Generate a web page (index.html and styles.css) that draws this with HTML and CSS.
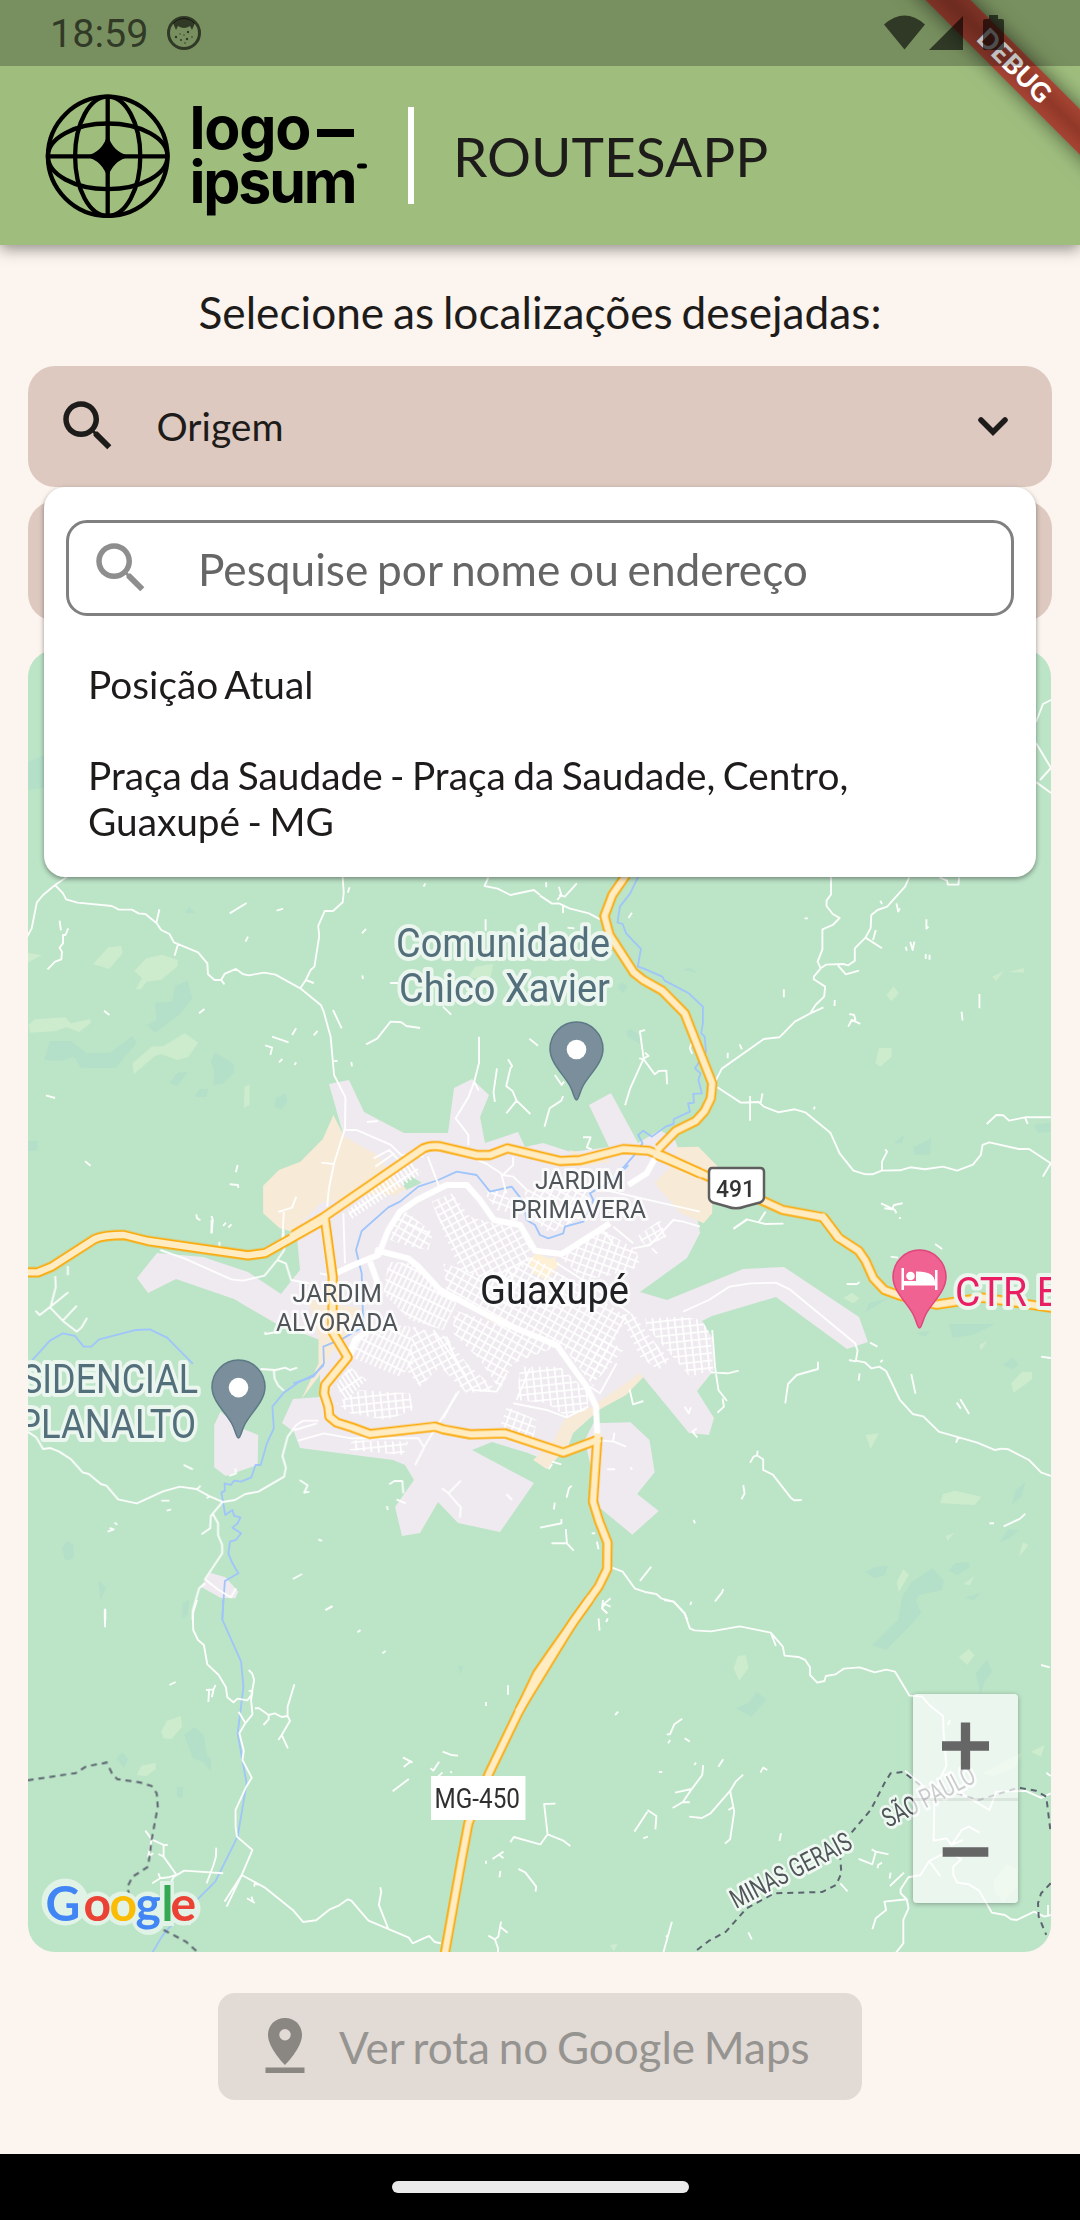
FILE: index.html
```html
<!DOCTYPE html>
<html lang="pt-BR">
<head>
<meta charset="utf-8">
<title>RoutesApp</title>
<link rel="stylesheet" href="styles.css">
</head>
<body>
<div class="screen">
  <header class="appbar">
    <svg class="logo" width="340" height="140" viewBox="40 85 340 140">
      <g class="globe">
        <ellipse cx="107.7" cy="155.3" rx="59.8" ry="59.6"/>
        <ellipse cx="107.7" cy="155.3" rx="32.6" ry="59.6"/>
        <ellipse cx="107.7" cy="155.3" rx="59.8" ry="32.8"/>
        <path d="M107.7 95V215M48 155.3H168"/>
      </g>
      <path d="M107.7 133Q112 151 130 155.3Q112 160 107.7 177.600Q103 160 85.500 155.300Q103 151 107.700 133Z"/>
      <text class="logo-text" x="189.500" y="147.500" textLength="122">logo</text>
      <text class="logo-text" x="189.500" y="201.800" textLength="168">ipsum</text>
      <rect x="317" y="128" width="37" height="8"/>
      <rect x="357" y="162.500" width="10" height="5" rx="2.500"/>
    </svg>
    <span class="divider"></span>
    <h1>ROUTESAPP</h1>
  </header>

  <div class="banner"><span>DEBUG</span></div>

  <div class="statusbar">
    <span class="clock">18:59</span>
    <svg width="36" height="36" viewBox="0 0 36 36">
      <circle cx="18" cy="18" r="15.500" fill="none" stroke="currentColor" stroke-width="3"/>
      <path fill="currentColor" d="M7 8Q18-2 29 8L26 15L24 11Q18 15 12 11L10 15Z"/>
      <g fill="currentColor"><circle cx="10" cy="22" r="1.200"/><circle cx="21" cy="24" r="1.200"/><circle cx="22" cy="17" r="1.200"/><circle cx="15" cy="25" r="1"/><circle cx="18" cy="20" r=".7"/><circle cx="26" cy="22" r=".8"/><circle cx="14" cy="19" r=".7"/><circle cx="19" cy="28" r=".8"/></g>
    </svg>
    <svg class="signals" width="124" height="40" viewBox="882 13 124 40" fill="currentColor">
      <path d="M883 24.500Q903.500 6.500 924 24.500L903.500 49.500Z"/>
      <path d="M928 50L962 16V50Z"/>
      <path d="M988 15H997V19H1001Q1003 19 1003 21V48Q1003 50 1001 50H984Q982 50 982 48V21Q982 19 984 19H988Z"/>
    </svg>
  </div>

  <main>
    <h2>Selecione as localizações desejadas:</h2>
    <section class="fields">
      <div class="field">
        <svg class="search" viewBox="0 0 24 24"><path d="M15.500 14h-.79l-.28-.27C15.410 12.590 16 11.110 16 9.500 16 5.910 13.090 3 9.500 3S3 5.910 3 9.500 5.910 16 9.500 16c1.610 0 3.090-.59 4.230-1.570l.27.28v.79l5 4.990L20.490 19l-4.990-5zm-6 0C7.010 14 5 11.990 5 9.500S7.010 5 9.500 5 14 7.010 14 9.500 11.990 14 9.500 14z"/></svg>
        <span>Origem</span>
        <svg class="chevron" width="36" height="26" viewBox="0 0 36 26"><path d="M6 7L18 19L30 7"/></svg>
      </div>
      <div class="field"></div>
      <div class="menu">
        <div class="query">
          <svg class="search" viewBox="0 0 24 24"><path d="M15.500 14h-.79l-.28-.27C15.410 12.590 16 11.110 16 9.500 16 5.910 13.090 3 9.500 3S3 5.910 3 9.500 5.910 16 9.500 16c1.610 0 3.090-.59 4.230-1.570l.27.28v.79l5 4.990L20.490 19l-4.990-5zm-6 0C7.010 14 5 11.990 5 9.500S7.010 5 9.500 5 14 7.010 14 9.500 11.990 14 9.500 14z"/></svg>
          <span>Pesquise por nome ou endereço</span>
        </div>
        <ul>
          <li>Posição Atual</li>
          <li>Praça da Saudade - Praça da Saudade, Centro, Guaxupé - MG</li>
        </ul>
      </div>
    </section>

    <section class="map">
      <svg width="1023" height="1302" viewBox="28 650 1023 1302">
        <defs>
          <pattern id="grid" width="22" height="22" patternUnits="userSpaceOnUse"><path d="M0 2.500H22M2.500 0V22"/></pattern>
          <pattern id="g20" href="#grid" patternTransform="rotate(20)"/>
          <pattern id="g30" href="#grid" patternTransform="rotate(29)"/>
          <pattern id="gm28" href="#grid" patternTransform="rotate(-28)"/>
          <pattern id="g5" href="#grid" patternTransform="rotate(-6)"/>
          <pattern id="fine" width="15" height="32" patternUnits="userSpaceOnUse" patternTransform="rotate(26)"><path d="M0 2.500H15M2.500 0V32"/></pattern>
          <pattern id="rows" width="13" height="36" patternUnits="userSpaceOnUse" patternTransform="rotate(-33)"><path d="M0 2.500H13M2.500 0V36"/></pattern>
          <g id="highways">
            <path transform="translate(540 860) scale(.3444 .3333)" d="M250 45L210 105L187 168L202 225L272 337L300 360L355 392L420 460L500 670L496 715L478 753L452 783L395 812L345 865"/>
            <path transform="translate(300 1130) scale(.3333)" d="M-20 315L70 262L370 55Q390 45 420 49L530 75H570L622 55L780 93L840 90L970 57L1045 62L1090 78L1200 130M75 270L98 440L97 605L143 682L75 765L72 790L85 830L88 860L110 878L155 892L210 912L405 890L430 898L510 913L615 910L790 968L892 930"/>
            <path transform="translate(540 860) scale(.3444 .3333)" d="M340 885L490 950L620 1010L705 1050L822 1072L865 1130"/>
            <path transform="translate(540 1220) scale(.3444 .3333)" d="M822 -8L865 52L925 92L945 122L968 175L1000 210L1040 225L1150 254L1285 233L1490 264M167 650L154 845L172 905L196 968L195 1047L170 1100L100 1200L-60 1470"/>
            <path transform="translate(0 1220) scale(.3444 .3333)" d="M60 157L110 157L150 140L275 57Q300 45 360 45L430 63L720 106L770 99L940 0"/>
            <path transform="translate(0 1600) scale(.3444 .3333)" d="M1710 0L1600 160L1560 220L1420 520L1360 670L1340 780L1290 1070"/>
          </g>
        </defs>

        <rect x="28" y="650" width="1023" height="1302" fill="#bce4c7"/>

        <g fill="#cdebcd">
          <path transform="translate(0 860) scale(.3444 .3333)" d="M80 278L122 286L80 308ZM270 312L315 262L352 258L356 280L317 327ZM390 332L425 295L470 284L516 300V318L468 360L425 365L410 388H394L412 355ZM83 495L100 478L190 472L205 490L263 477V490L230 516L192 502L160 514L88 518ZM385 610L440 560L475 558L536 520L576 548L546 592L515 600L468 583L450 588L388 643ZM710 680L725 673V735L708 743ZM1360 350L1380 320L1432 312L1425 350L1400 360Z"/>
          <path transform="translate(540 860) scale(.3444 .3333)" d="M1006 405L1027 379L1042 400L1020 424ZM984 564H1021V590L988 620L974 610ZM1312 350L1346 334L1325 362ZM1360 336L1405 324V338Z"/>
          <path transform="translate(540 1220) scale(.3444 .3333)" d="M880 235L905 218L928 235L910 250ZM945 645L984 640L960 687ZM1162 850L1170 822L1205 812L1282 830L1262 855ZM1368 490L1400 455L1429 456V478L1375 518ZM1276 375L1299 362L1280 392ZM1036 1085L1055 1047L1071 1065L1042 1116ZM1178 948L1203 938L1184 962ZM1390 1012L1402 967L1419 975ZM1230 1092L1262 1067L1248 1096Z"/>
          <path transform="translate(540 1600) scale(.3444 .3333)" d="M1216 172L1245 147L1262 165L1241 195ZM562 205L575 168L597 165L606 203L578 243ZM1425 455L1465 435L1455 470ZM1285 520L1400 458L1380 500L1320 528ZM1318 842L1355 793L1385 810V860L1345 905L1318 872ZM203 1035L225 1031L215 1055Z"/>
          <path transform="translate(0 1600) scale(.3444 .3333)" d="M468 395L485 362L525 348L529 380L498 417L475 415ZM397 525L410 497L452 488V508L425 529Z"/>
        </g>
        <g fill="#b4dfc9">
          <path transform="translate(0 860) scale(.3444 .3333)" d="M128 600L145 543H205L252 580L320 578L385 528L396 550L335 623H235L215 590L180 602ZM450 428L500 425L508 378L545 362L558 415L524 460L450 518L427 496L455 480ZM612 605L625 577L678 612L680 635L650 670L620 675L622 632ZM493 668L515 638L546 635L515 678ZM565 710L580 688L606 686L598 711ZM797 742L800 715L830 700L834 725L818 746ZM537 160L549 140L567 160ZM80 842L109 844L108 872H80Z"/>
          <path transform="translate(540 860) scale(.3444 .3333)" d="M415 330L435 322L455 338ZM252 515L262 508L290 525V552L255 530ZM1083 862L1136 836L1132 884H1088ZM1028 850L1057 824L1052 850ZM1436 795L1482 788V815L1445 818ZM226 380L240 368L254 380L240 400Z"/>
          <path transform="translate(540 1220) scale(.3444 .3333)" d="M1187 312H1322L1255 345L1198 353ZM1092 340L1132 332L1118 350ZM946 276L955 250L1014 233ZM1344 434L1373 413L1389 435L1370 448ZM1370 855L1382 810L1409 787L1398 830ZM1336 965L1360 927L1389 930L1365 955ZM946 1055L975 1040L1009 1038L1002 1065L970 1075ZM1187 1050L1205 1030L1245 1026L1248 1042L1210 1065ZM1052 1130L1080 1085L1140 1045L1172 1080L1168 1110L1100 1125L1092 1140L1106 1178L1085 1205L1005 1290L965 1275L1040 1200ZM1235 1132L1280 1118L1258 1142Z"/>
          <path transform="translate(0 1600) scale(.3444 .3333)" d="M535 405L565 382L592 405L600 465L613 475L612 515L590 485L560 475ZM337 475L355 457L372 478L360 503ZM513 560L532 562L530 595L514 590ZM530 10L550 0L545 45L530 55ZM1329 197L1345 200L1337 222Z"/>
          <path transform="translate(540 1600) scale(.3444 .3333)" d="M570 325L605 310L630 276L656 298L615 350ZM1265 220L1298 178L1313 215L1290 245L1280 285Z"/>
          <path transform="translate(0 1220) scale(.3444 .3333)" d="M180 985L195 963L213 975V1015L190 1022ZM286 1080L307 1105L292 1140Z"/>
          <path d="M28 762L44 755V788L28 790Z"/>
        </g>

        <g fill="#efeaef">
          <path d="M329 1084L349 1080L364 1112L404 1133H448L454 1088L472 1079L489 1095L480 1117L485 1143L518 1132L525 1147L543 1143L571 1152L609 1147L589 1105L611 1093L638 1143L660 1130L675 1140L690 1180L700 1233L687 1258L640 1292L667 1300L743 1269L784 1267L859 1317L868 1342L847 1349L776 1297L712 1316L702 1321L712 1337L714 1370L697 1391L714 1418L709 1435L689 1433L643 1377L599 1410L573 1433L568 1447L545 1460L528 1453L492 1442L472 1450L534 1483L500 1532L458 1523L438 1502L420 1533L402 1536L395 1507L414 1480L405 1465L393 1460L300 1448L294 1432L282 1423L293 1399L320 1397V1340L275 1323L234 1299L176 1279L148 1293L137 1278L157 1253L203 1257L248 1272L281 1294L300 1270L297 1237L293 1230L320 1203L344 1137Z"/>
          <path transform="translate(540 1220) scale(.3444 .3333)" d="M155 610L263 607L318 660L333 757L282 822L345 873L268 944L175 865L130 660Z"/>
          <path transform="translate(0 1220) scale(.3444 .3333)" d="M640 575L622 615V742L655 768L748 735L750 645L700 625ZM610 1058L655 1072L692 1115L683 1135L640 1133L583 1100Z"/>
        </g>
        <g fill="#f7ead6">
          <path transform="translate(0 860) scale(.3444 .3333)" d="M968 765L937 838L872 905L810 930L764 977V1060L812 1105L850 1115L930 1030L1100 1000L1145 1008L1180 985L1160 975L1095 885L1000 830Z"/>
          <path transform="translate(540 860) scale(.3444 .3333)" d="M392 862L460 860L515 918L500 960V1060L475 1090L410 1060L332 970L390 910ZM85 870L210 905L120 920Z"/>
          <path transform="translate(0 1220) scale(.3444 .3333)" d="M895 240L1050 265L1030 330L960 400L925 470L875 538L925 430V350Z"/>
          <path transform="translate(540 1220) scale(.3444 .3333)" d="M290 458L300 472L250 525L170 570L95 640L80 680L20 748L-20 720L40 660L70 600L150 560L250 490Z"/>
        </g>
        <path transform="translate(300 1130) scale(.3333)" fill="#fdf0d5" d="M685 390L710 370L780 400L740 450L700 430ZM550 560L575 550L620 570L600 585ZM700 400L770 380L750 420Z"/>
        <path transform="translate(0 860) scale(.3444 .3333)" fill="#bce4c7" d="M1168 970L1195 950L1225 968L1180 990Z"/>

        <g class="blocks" transform="translate(300 1130) scale(.3333)">
          <path fill="url(#gm28)" d="M395 215L455 190L510 260L580 280L650 290L690 350V390L620 460L540 440L480 420L440 330L420 280Z"/>
          <path fill="url(#g30)" d="M285 270L320 245L400 310L385 360L330 350L270 330Z"/>
          <path fill="url(#fine)" d="M265 395L330 400L400 450L470 520L430 600L330 570L250 490Z"/>
          <path fill="url(#g30)" d="M430 400L560 440L700 380L860 480L980 560L940 640L880 770L790 650L640 590L520 530L440 480Z"/>
          <path fill="url(#fine)" d="M160 620L250 580L330 590L340 700L300 740L150 680Z"/>
          <path fill="url(#gm28)" d="M340 590L440 620L500 700L590 780L500 790L420 710L360 770L320 720Z"/>
          <path fill="url(#g30)" d="M460 540L560 570L700 620L770 650L640 700L600 780L540 690L460 610Z"/>
          <path fill="url(#g5)" d="M660 710H780L870 790L860 840L800 860L740 820L650 810Z"/>
          <path fill="url(#g20)" d="M620 830L710 870L700 930L600 890Z"/>
          <path fill="url(#g20)" d="M780 380L860 330L910 300L1010 360L1020 410L910 440L850 450Z"/>
          <path fill="url(#gm28)" d="M1010 320L1080 270L1100 320L1040 350Z"/>
          <path fill="url(#g5)" d="M1035 565L1150 560L1205 570L1230 610L1240 720L1170 740L1040 590Z"/>
          <path fill="url(#gm28)" d="M960 555L1000 550L1050 620L1110 690L1075 720L1020 680Z"/>
          <path fill="url(#g5)" d="M110 820L180 780L330 790L340 840L260 870L150 850Z"/>
          <path fill="url(#g5)" d="M155 930L325 935L310 975L150 960Z"/>
          <path fill="url(#rows)" d="M145 240L330 90L365 130L230 220L150 270Z"/>
          <path fill="url(#rows)" d="M110 760L150 710L200 750L130 820Z"/>
          <path fill="url(#g30)" d="M670 180L880 170L850 260L750 310L700 270Z"/>
          <path fill="url(#g20)" d="M550 185L620 180L640 250L590 240Z"/>
          <path fill="url(#g30)" d="M880 600L970 660L900 740L870 760Z"/>
        </g>

        <g class="river">
          <path transform="translate(540 860) scale(.3444 .3333)" d="M285 50L262 100L232 140L225 187L240 192L250 220L293 267L284 320L300 325L355 350L362 362L432 400L473 440V490L468 520L478 530L482 575L450 625L466 640L460 660L470 700L445 702L447 728L430 730L435 755L388 778V792L365 800L325 830L300 812L285 825L298 850L270 890L240 925"/>
          <path transform="translate(300 1130) scale(.3333)" d="M985 105L940 150L870 190L880 210L850 275L795 290L790 310L745 325L720 315L705 285L680 270L670 215L635 170L570 185L530 135L470 125L415 150L355 170L300 215L265 232L185 303L168 360L185 430L190 590L130 625L70 650L72 700L40 740L-20 760"/>
          <path transform="translate(0 1220) scale(.3444 .3333)" d="M90 425L145 362L183 340L218 348L243 380H265L288 358L395 330L435 328L485 353L560 432M940 435L910 465L865 488L822 520L791 560L795 625L775 670L757 735H742L730 772L700 785L680 782L670 795L652 790L653 812L643 818L654 885L675 870L680 888L698 892L690 910L675 923L700 940L685 960L668 965L663 1000L675 1030L692 1060L653 1083L645 1200"/>
          <path transform="translate(0 1600) scale(.3444 .3333)" d="M648 0L646 60L700 185L707 260L690 400L716 550L690 710L625 845L485 990L470 1010L440 1062"/>
        </g>

        <g class="roads">
          <path d="M1051 700L1043 704L1036 722M1036 743L1051 768L1040 780M1036 782L1051 793"/>
          <path transform="translate(0 860) scale(.3444 .3333)" d="M195 50L160 75L125 105L107 127L92 205L78 232M160 75L183 100L192 118L225 128L325 138L345 149H383L402 160L422 162L455 190L468 210L492 222L505 247L575 277L602 310L604 343L623 360H642L652 373M642 360L652 342L685 327L705 342L722 346L767 338L800 344L872 385L932 436L940 455L960 530L970 645L1003 712L1002 805L970 910L955 985L950 1040M995 50L998 98L995 127L967 153H943L924 198L927 228L913 320L902 330L888 360L872 385M888 360L911 369M463 148L454 188M517 252L507 287M716 129L667 160M803 152L822 146M173 182L177 211M198 205L190 225H183V250L173 263L180 275L178 298L160 305L138 328M720 230L713 245M1063 207L1051 220M1015 82L1010 98M1235 70L1230 80M967 450L992 505M1063 553L1095 536L1134 485L1165 487L1180 498L1220 504M1391 530V608L1377 665L1360 712L1323 775L1360 825V855M1377 665L1390 692M1475 598L1487 618L1482 625L1470 678L1488 693L1500 722L1470 760M1500 722L1540 762M1443 625L1433 697L1437 726M1410 178V212M302 452L318 465M594 447L578 460M770 556L790 563L785 585M790 530L838 547M860 505L848 525M922 513L911 526M820 597L810 607M860 607L855 615M133 706L160 714M247 904L263 917M690 915L685 937M667 973L691 975L692 984M570 1063L572 1075L582 1081M614 1068L618 1080L614 1120M656 1088L648 1098M672 1093L663 1103M970 603H980M1020 606L1022 619M1052 346L1054 357M1003 810L1035 810L1135 855L1165 885L1230 890M1242 890L1275 980M933 908L968 912M860 1010L848 1043L808 1056M824 1056L820 1140M1085 895L1130 870L1170 915M1090 920L1145 880M1065 786L1097 783M1133 369H1157M1286 440L1310 464M1537 536L1562 557M1418 52L1407 78L1445 86L1482 105L1550 90L1568 105M1385 900L1410 910L1455 940L1470 1000M1490 890V915L1460 945L1490 950L1530 990"/>
          <path transform="translate(540 860) scale(.3444 .3333)" d="M0 107L35 131L55 130L85 145L142 160L175 178M107 70L72 110L55 105M55 80L62 105L50 120M67 135V160M267 158L257 174M18 66V82M845 50V103L832 122V138L850 162L870 174L850 195L820 208V268L806 305L815 325L795 350V358L828 380L825 410L800 435L785 460L740 485L695 532L650 537L528 626L510 662M815 325L830 314L880 312L895 316L914 302V265L945 233L960 205L962 165L980 150L1008 140L1060 80L1072 52M975 210L967 240M945 233L993 265M865 316L888 343L926 332M785 460L823 442M1160 52L1182 62L1184 74H1215L1217 52M1035 130L1040 155L1045 145M988 122L993 132M1122 178V206L1128 200M1075 245L1082 270L1087 245M1062 260L1065 272M1120 282V297M1131 284V299M708 388V412M856 420L855 438M895 500L905 480L930 492M898 462L912 465L916 480L902 485M1276 402V445M1224 455L1227 482M768 175H778M545 578V595M580 553L586 568M515 682L583 728L635 726L650 740L693 757L740 748L770 757L843 818L870 880L910 932L945 943H965L992 932L1045 931L1075 922L1117 928L1170 920L1211 932L1257 914L1280 885L1285 855L1305 847L1390 867H1420L1483 910L1460 950M993 932V905L1008 875L1002 868M610 708V782M641 728L646 700M798 740L795 748M1297 792L1325 765L1345 766L1362 782L1408 772H1483M1408 772L1416 792M990 1030L1030 1050L1035 1060M1053 1030L1028 1035L1022 1048L1000 1045M1042 1074H1048M562 1107L600 1078L635 1087L655 1092L707 1091M655 1055L635 1087M305 510L290 514L301 595L262 685L247 736M288 595L301 598L333 643L345 633L367 632L369 673M301 595L315 588L305 578M440 550L435 565L442 582M67 708L62 722L28 745L13 800M43 645L63 675L70 665M125 832H147L136 862L150 868M80 203L100 205"/>
          <path transform="translate(0 1220) scale(.3444 .3333)" d="M80 635L105 652L125 687L145 684L172 695L205 717L240 757L258 762L293 792L309 797L343 838L397 850L473 814L522 800L570 807L605 827L646 846L682 840L712 822L750 815L825 770L830 743L820 708L835 650L860 615L880 602H925M646 846L612 888L610 925L585 943M617 880L633 910V945L645 975V1000L595 1078L635 1110L670 1132L685 1105M595 1090L578 1105L560 1170L559 1200M465 90L535 115L672 178L705 182L768 167L805 120L825 90L823 30M805 120L830 130L845 180L900 190M160 168L162 200L146 263L182 302L223 335L237 322L253 293M103 272L115 285L146 260L198 217M182 302L223 257M197 138V166M756 447L800 450L828 443L842 450L863 443M795 450L797 475L808 497L824 512M533 735L560 748M572 808L582 797M600 835L610 828M468 842H492M484 872L497 868M312 935L330 928L318 924M333 907L340 915M870 780L893 796L883 818L898 815M924 958L935 963M850 1077L877 1062M945 1170L965 1158M305 1167V1200M1130 793L1145 783H1168L1171 820M1151 838L1178 850M1123 858L1126 870M1338 782L1302 820L1338 862L1335 893M1283 805L1302 820M1470 822L1487 840M1333 512L1240 665L1205 735M855 630L920 610M865 662L940 640L1020 655L1215 655L1230 680M637 65V82M614 0V40M770 335V342L810 335M683 745L685 760L665 768"/>
          <path transform="translate(540 1220) scale(.3444 .3333)" d="M415 275L490 240L550 200L610 190L685 188L725 208L915 370L922 392L917 422L943 427L962 445L985 440L1005 453L1045 540L1082 582L1113 589L1158 635L1270 668L1320 690L1340 686L1360 688L1420 720L1455 757L1483 768M897 420L917 424M1208 668L1214 652M807 425V447L745 465L720 492L712 550M1078 462L1090 521M928 460L925 482M958 368L980 380M995 420L988 426M1220 537L1246 582M1210 548L1222 566M1018 110L1040 113M1147 72L1168 87M1455 410L1483 414M890 192H920L928 186M500 330L508 440L518 510L543 543M530 535L534 560L515 578M495 457L545 460L577 452M260 508L270 553L300 543M632 692L630 706L648 718V750L676 764L728 833L738 841L760 840M630 706L620 710L610 728M590 795L594 820L585 838M420 560L432 580L438 562M455 625L442 635L457 652M446 900L450 910M1305 910H1318M1346 919L1394 896L1409 881M182 662L215 665L250 680M216 638L212 664M210 1043L240 1055L275 1105L305 1116L338 1122L352 1135L388 1145L420 1180L428 1200M323 1040L290 1083M532 1107L528 1118L508 1144M205 1135L190 1148L180 1165L195 1180M183 1150L205 1160M440 1145L436 1155M92 797L84 805L77 833M43 848L40 868M0 923L62 910V897M33 970H78L75 927M78 970L98 992M35 732L25 748M35 725L62 733M195 748H218M262 742L268 748M165 965L170 988M150 940H160M325 85L340 100M562 25L600 0"/>
          <path transform="translate(0 1600) scale(.3444 .3333)" d="M572 0L560 40L561 90L575 120L592 135L602 193L635 225L656 262L660 292L678 307L690 296L718 301L730 285L738 240L732 220L722 210M722 272L733 275L729 300L733 343L712 370L695 400L708 452L704 480L731 533L715 560L684 630V680L688 710L733 750L702 825L768 862L850 930L880 966L918 961L958 928L985 916L1010 898L1020 902L1070 962L1127 987L1187 1013L1198 1030L1246 1008L1262 1026L1280 1030M693 335L712 368M702 825L658 920M702 825L652 905M740 325H752L780 345L798 340L818 351L835 348L842 362L818 405L836 445M835 348V320L855 253M780 345V358L765 375M818 405L808 420M1104 862L1107 875L1100 915L1127 985M628 743L627 770L620 795L600 850M648 820L535 812L505 830L495 850M513 825L475 770L460 762M475 770V735H487M475 735L440 718L422 692M440 720L430 770L445 760M442 850L465 835L490 832L510 825M460 820L465 835M492 255L510 246M945 30L965 19M1038 97L1047 90M1110 160L1120 153M305 26V82M598 270L620 268L626 255M607 272L605 306M615 292L620 270M1170 472L1198 488M1195 482L1172 501M1285 455L1310 465L1330 467M1275 485L1258 512L1250 505M1140 574L1187 537M1285 517L1272 530M1310 513V520M1475 256V284M1411 306V318M1411 782V791M1430 777L1462 755M1450 765L1462 775M1453 813L1450 832M1482 727L1492 711L1568 733M1505 807L1525 817L1557 860L1555 875M1455 965L1447 1010L1437 1018L1446 1045V1058M1418 1007L1437 1018M1452 980L1474 998M717 895L740 909M730 890L735 905M738 860L740 850L750 855M565 960L575 945M549 975L560 950"/>
          <path transform="translate(540 1600) scale(.3444 .3333)" d="M360 0L388 5L420 40L435 85L448 91L497 94L580 79L670 98L705 140L710 167L750 171L770 180L784 202V225L805 248L826 243L830 228L858 223L882 206L928 202L972 217L1005 209L1031 215L1073 287L1110 290L1130 315L1170 348L1172 400L1180 497L1160 540L1145 600L1143 722L1180 715L1195 735L1228 720M670 98L685 138M1120 560L1240 590L1305 630L1325 575L1410 573L1455 594L1483 580M1060 512L1150 590M1240 590L1200 560M1180 750L1223 778L1200 800V825L1212 848L1245 853L1275 872L1312 938L1350 945L1368 958L1385 960L1435 935L1465 950L1483 945M1170 762L1130 783L1105 825L1070 832L1047 868V880L1065 898L1070 925L1055 960V1030L1032 1060M1065 898L1000 905L1005 930L975 955L965 988M1130 783L1162 828M1195 735L1225 690L1245 680L1276 698M413 356L390 373L378 402L368 404M420 415L435 425M378 420L372 430M227 335L218 345M345 516H355M453 488L448 495M532 478L518 500M474 495L471 525L440 568L415 606L385 624M392 578L440 567M415 606L435 607M590 524L568 545L552 573L495 640L470 654L433 650M552 573L564 635L552 718L537 731M547 630L560 622M640 518L648 503L660 510M312 630L338 648L335 688M312 635L274 695M300 715L313 710M0 735L22 703L68 722L88 738M22 703L12 612L45 611M700 700L695 723M383 965L358 1058M365 1008L372 1010M605 997L615 1018M872 850L893 874M963 748L975 755L1012 763M975 755L965 793L925 777M980 805L982 795L993 788M1018 818L1015 836M1057 818L1016 858M1455 195L1480 202M1470 518L1483 528M1475 915V945M170 55L173 92M197 55L192 66M183 0L180 25L195 40M1190 360L1185 375"/>
          <path transform="translate(300 1130) scale(.3333)" d="M640 820L740 840L800 862L865 830M430 865L470 790M390 310L300 270M130 250L135 400M60 430L110 440M870 170L1200 245M1130 0L1060 90M1000 355L1050 345L1120 270L1150 275L1200 290M940 290L1000 340M900 290L940 340M950 700L900 790L870 770M650 810L690 715M440 620L470 700L520 780L590 785L620 730M400 600L500 740M770 400L880 470L990 550"/>
        </g>
        <g class="avenues" transform="translate(300 1130) scale(.3333)">
          <path d="M108 430L160 405L235 375L265 300L300 245L350 210L440 165L500 165L540 210L582 270L660 285L705 362L785 372L930 280M985 165L1040 130L1065 85"/>
          <path d="M225 360L325 385L355 410L420 480L600 575L770 645L860 770L888 830L892 920"/>
          <path d="M210 395L230 450L235 500M200 605L165 630L148 670"/>
        </g>

        <use href="#highways" class="case"/>
        <use href="#highways" class="lane"/>

        <g class="border">
          <path transform="translate(0 1600) scale(.3444 .3333)" d="M80 541L220 519L250 499L310 488L325 520L340 537L405 547L440 558L455 580L458 620L440 720L430 800L385 830L370 860L378 905M475 990L540 1025L572 1055"/>
          <path transform="translate(540 1600) scale(.3444 .3333)" d="M456 1050L490 1023L540 995L600 925L680 880L820 876L860 855L875 820L872 775M905 697L960 630L1000 550L1018 520L1055 516L1110 560L1190 575L1275 600L1390 563L1440 572L1470 590L1483 700M1483 850L1455 880L1446 910L1448 950L1470 1005"/>
        </g>

        <g class="place slate">
          <text x="396" y="957" textLength="214" lengthAdjust="spacingAndGlyphs">Comunidade</text>
          <text x="399" y="1002" textLength="211" lengthAdjust="spacingAndGlyphs">Chico Xavier</text>
          <text x="198" y="1393" text-anchor="end" textLength="177" lengthAdjust="spacingAndGlyphs">SIDENCIAL</text>
          <text x="196" y="1438" text-anchor="end" textLength="178" lengthAdjust="spacingAndGlyphs">PLANALTO</text>
        </g>
        <text class="place rose" x="955" y="1305.700" textLength="104" lengthAdjust="spacingAndGlyphs">CTR E</text>
        <text class="place city" x="480" y="1304" textLength="149" lengthAdjust="spacingAndGlyphs">Guaxupé</text>
        <g class="district">
          <text x="535" y="1189" textLength="89" lengthAdjust="spacingAndGlyphs">JARDIM</text>
          <text x="511" y="1218" textLength="135" lengthAdjust="spacingAndGlyphs">PRIMAVERA</text>
          <text x="292.500" y="1302" textLength="89.500" lengthAdjust="spacingAndGlyphs">JARDIM</text>
          <text x="276" y="1331" textLength="122" lengthAdjust="spacingAndGlyphs">ALVORADA</text>
          <text transform="translate(736 1909) rotate(-27.500)" textLength="133" lengthAdjust="spacingAndGlyphs">MINAS GERAIS</text>
          <text transform="translate(888 1828) rotate(-27.500)" textLength="101" lengthAdjust="spacingAndGlyphs">SÃO PAULO</text>
        </g>

        <g class="pin">
          <path transform="translate(576.500 1054)" d="M0 46C-2 46-3 39-6 33C-11 22-26.500 10-26.500-5A26.500 27 0 0 1 26.500-5C26.500 10 11 22 6 33C3 39 2 46 0 46Z"/>
          <circle cx="576.500" cy="1049.500" r="9.800"/>
          <path transform="translate(238.500 1392)" d="M0 46C-2 46-3 39-6 33C-11 22-26.500 10-26.500-5A26.500 27 0 0 1 26.500-5C26.500 10 11 22 6 33C3 39 2 46 0 46Z"/>
          <circle cx="238.500" cy="1387.600" r="9.800"/>
        </g>
        <g class="pin hotel">
          <path transform="translate(919.500 1282)" d="M0 46C-2 46-3 39-6 33C-11 22-26.500 10-26.500-5A26.500 27 0 0 1 26.500-5C26.500 10 11 22 6 33C3 39 2 46 0 46Z"/>
          <circle cx="910.500" cy="1276" r="4.300"/>
        </g>
        <path fill="#fff" d="M901.500 1268H904V1281H916V1271.500Q934 1271 935 1281.500V1270H937.500V1290H935V1285.500H904V1290H901.500Z"/>

        <path d="M712 1168H760Q764 1168 764 1172V1197Q764 1201 760 1202.500L745 1206.500Q736 1210 727 1206.500L713 1202.500Q709 1201 709 1197V1172Q709 1168 712 1168Z" fill="#fff" stroke="#5f5f60" stroke-width="2.500"/>
        <text class="road-no" x="716" y="1197" textLength="39" lengthAdjust="spacingAndGlyphs">491</text>
        <rect x="431" y="1776" width="94.500" height="44" fill="#fff"/>
        <text class="road-name" x="434.500" y="1808" textLength="85.500" lengthAdjust="spacingAndGlyphs">MG-450</text>

        <g class="halo">
          <circle cx="65" cy="1902" r="23.500"/><circle cx="96.500" cy="1908.500" r="17"/><circle cx="122.500" cy="1908.500" r="17"/><circle cx="148" cy="1908.500" r="17"/><circle cx="148.500" cy="1918" r="17"/><circle cx="183.500" cy="1908.500" r="17"/><path d="M160 1881H174V1926H160Z"/>
        </g>
        <text class="google" y="1920.500"><tspan x="45.500" fill="#4285f4">G</tspan><tspan x="83.500" fill="#ea4335">o</tspan><tspan x="109.500" fill="#fbbc05">o</tspan><tspan x="135.500" fill="#4285f4">g</tspan><tspan x="161.500" fill="#34a853">l</tspan><tspan x="170.500" fill="#ea4335">e</tspan></text>
      </svg>
      <div class="zoom">
        <svg width="105" height="104" viewBox="0 0 105 104"><path d="M29 52H76M52.500 28.500V75.500"/></svg>
        <svg width="105" height="105" viewBox="0 0 105 105"><path d="M29 52.500H76"/></svg>
      </div>
    </section>

    <div class="action">
      <svg width="40" height="58" viewBox="0 0 40 58"><path fill-rule="evenodd" d="M20 1C10 1 3 8.500 3 18C3 31 20 48 20 48S37 31 37 18C37 8.500 30 1 20 1ZM20 12A5.700 5.700 0 1 1 20 23.400A5.700 5.700 0 1 1 20 12ZM.5 50.500H39.500V56H.5Z"/></svg>
      <span>Ver rota no Google Maps</span>
    </div>
  </main>
  <nav><i></i></nav>
</div>
</body>
</html>
```
FILE: styles.css
```css
* { box-sizing: border-box; margin: 0; padding: 0; }
body { width: 1080px; height: 2220px; overflow: hidden; background: #fcf4ee; font-family: Lato, sans-serif; color: #1e1c1a; word-spacing: -2.5px; }
.screen { position: relative; display: flex; flex-direction: column; width: 1080px; height: 2220px; overflow: hidden; }

.appbar { display: flex; align-items: center; height: 245px; padding: 66px 0 0 40px; background: #9fbe7e; box-shadow: 0 4px 14px rgba(0, 0, 0, .42); flex: none; z-index: 1; }
.globe { fill: none; stroke: #000; stroke-width: 4.3; }
.logo-text { font: 700 59px Inter, sans-serif; }
.divider { width: 6px; height: 97px; margin-left: 28px; background: #fff; }
.appbar h1 { margin-left: 39px; font-size: 55px; font-weight: 400; line-height: 66px; }

.banner { position: absolute; z-index: 2; left: 864px; top: 50px; width: 300px; height: 32px; transform: rotate(45deg); background: linear-gradient(#a64433, #913829 50%, #a64433); box-shadow: 0 0 20px rgba(0, 0, 0, .55); text-align: center; }
.banner span { display: block; font: 900 26.5px/31px Lato, sans-serif; color: #fff; }

.statusbar { position: absolute; z-index: 3; top: 0; left: 0; display: flex; align-items: center; width: 1080px; height: 66px; padding: 0 73px 0 50px; background: rgba(0, 0, 0, .245); color: rgba(0, 0, 0, .6); }
.clock { font: 400 39.5px/66px Roboto, sans-serif; margin-right: 18px; padding-top: 2px; }
.signals { margin-left: auto; }

main { display: flex; flex-direction: column; align-items: center; flex: 1; }
h2 { height: 121px; padding-top: 41px; font-size: 44.2px; font-weight: 400; line-height: 52px; }
.fields { position: relative; display: flex; flex-direction: column; gap: 14px; z-index: 1; }
.field { display: flex; align-items: center; width: 1024px; height: 120.5px; padding: 0 41px 0 26.5px; border-radius: 27px; background: #ddc9c0; font-size: 39px; }
.search { width: 66px; height: 66px; fill: #1e1c1a; }
.field span { margin-left: 36px; }
.chevron { margin-left: auto; fill: none; stroke: #1e1c1a; stroke-width: 5.5; stroke-linecap: round; }

.menu { position: absolute; left: 16px; top: 121px; width: 992px; height: 390px; padding: 33px 22.5px 0 22px; border-radius: 21px; background: #fff; box-shadow: 0 2px 5px rgba(0, 0, 0, .4); }
.query { display: flex; align-items: center; height: 96px; padding-left: 19px; border: 3px solid #808080; border-radius: 21px; color: #666; font-size: 44.2px; }
.query .search { fill: #8e8e8e; }
.query span { margin-left: 44px; padding-top: 1px; }
.menu ul { display: flex; flex-direction: column; gap: 45px; padding: 45px 100px 0 22px; list-style: none; font-size: 38.8px; line-height: 46px; }

.map { position: relative; align-self: flex-start; width: 1023px; height: 1302px; margin: 28.5px 0 0 28px; border-radius: 27px; overflow: hidden; word-spacing: 0; }
.map > svg { display: block; }
.map path { vector-effect: non-scaling-stroke; }
.map pattern path { vector-effect: none; fill: none; stroke: #fff; stroke-width: 5; }
.river, .roads, .avenues, .border { fill: none; stroke-linejoin: round; }
.river { stroke: #9fc5fb; stroke-width: 1.8; }
.roads { stroke: #fff; stroke-width: 1.9; opacity: .95; }
.avenues { stroke: #fff; stroke-width: 6; }
.case, .lane { fill: none; stroke-linejoin: round; }
.case { stroke: #fcab0e; stroke-width: 10.2; }
.lane { stroke: #ffecc2; stroke-width: 6.4; stroke-linecap: square; }
.border { stroke: #5c6470; stroke-width: 2; stroke-dasharray: 6 5; }
.map text { font-family: Roboto, sans-serif; paint-order: stroke; stroke-linejoin: round; }
.place { font-size: 41px; stroke: rgba(236, 247, 240, .95); stroke-width: 8px; }
.slate { fill: #546f7c; }
.rose { fill: #e91e63; }
.map .city { fill: #202124; stroke: rgba(255, 255, 255, .7); stroke-width: 6px; }
.district { font-size: 26.5px; fill: #50555a; stroke: rgba(255, 255, 255, .75); stroke-width: 6px; }
.road-no { font-size: 24px; font-weight: 500; fill: #333; }
.road-name { font-size: 28px; fill: #303030; }
.pin path { fill: #7a8f9b; stroke: #5d7886; stroke-width: 1.5; }
.pin circle { fill: #fff; }
.hotel path { fill: #f06292; stroke: #e0457b; }
.map .google { font: 700 48px Lato, sans-serif; }
.halo { fill: #e1f3e6; }

.zoom { position: absolute; left: 885px; top: 1044.5px; display: flex; flex-direction: column; width: 105px; height: 209px; border-radius: 4px; background: rgba(255, 255, 255, .7); box-shadow: 0 1px 5px rgba(0, 0, 0, .3); }
.zoom svg + svg { border-top: 3px solid rgba(0, 0, 0, .07); }
.zoom path { stroke: #666; stroke-width: 9.3; }

.action { display: flex; align-items: center; width: 644px; height: 107px; margin-top: 41px; padding-left: 47px; border-radius: 17px; background: #e2dad5; color: #969490; font-size: 44px; }
.action svg { fill: #8a8681; }
.action span { margin-left: 34px; padding-top: 2px; }
nav { display: flex; justify-content: center; align-items: flex-start; height: 66px; padding-top: 27px; background: #000; flex: none; }
nav i { width: 297px; height: 12px; border-radius: 6px; background: #eaeaea; }
```
